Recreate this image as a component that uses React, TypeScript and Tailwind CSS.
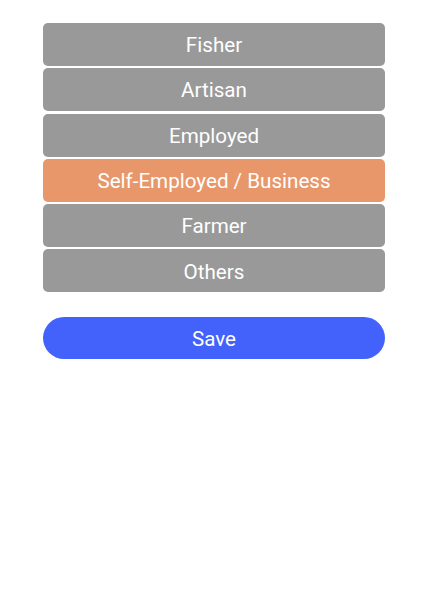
const options = ["Fisher", "Artisan", "Employed", "Self-Employed / Business", "Farmer", "Others"];

export default function App() {
  const selected = "Self-Employed / Business";
  return (
    <div className="min-h-[592px] bg-white pl-[43px] pr-[42px] pt-[23px] font-['Roboto',sans-serif]">
      <div className="flex flex-col gap-[2.3px]">
        {options.map((o) => (
          <button
            key={o}
            className={`h-[43px] w-full rounded-[5px] pt-[2px] text-[20.6px] text-white ${
              o === selected ? "bg-[#e8976a]" : "bg-[#999999]"
            }`}
          >
            {o}
          </button>
        ))}
      </div>
      <button className="mt-[25px] h-[42px] w-full rounded-full bg-[#4262fb] pt-[1px] text-[20.6px] text-white">
        Save
      </button>
    </div>
  );
}
